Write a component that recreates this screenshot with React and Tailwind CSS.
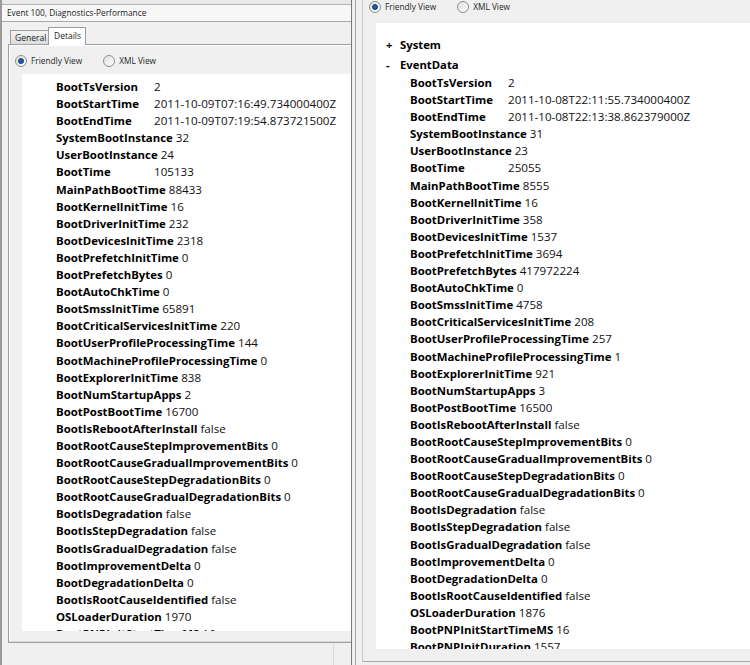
import React from "react";

const leftRows = [
  ["BootTsVersion", "2"],
  ["BootStartTime", "2011-10-09T07:16:49.734000400Z"],
  ["BootEndTime", "2011-10-09T07:19:54.873721500Z"],
  ["SystemBootInstance", "32"],
  ["UserBootInstance", "24"],
  ["BootTime", "105133"],
  ["MainPathBootTime", "88433"],
  ["BootKernelInitTime", "16"],
  ["BootDriverInitTime", "232"],
  ["BootDevicesInitTime", "2318"],
  ["BootPrefetchInitTime", "0"],
  ["BootPrefetchBytes", "0"],
  ["BootAutoChkTime", "0"],
  ["BootSmssInitTime", "65891"],
  ["BootCriticalServicesInitTime", "220"],
  ["BootUserProfileProcessingTime", "144"],
  ["BootMachineProfileProcessingTime", "0"],
  ["BootExplorerInitTime", "838"],
  ["BootNumStartupApps", "2"],
  ["BootPostBootTime", "16700"],
  ["BootIsRebootAfterInstall", "false"],
  ["BootRootCauseStepImprovementBits", "0"],
  ["BootRootCauseGradualImprovementBits", "0"],
  ["BootRootCauseStepDegradationBits", "0"],
  ["BootRootCauseGradualDegradationBits", "0"],
  ["BootIsDegradation", "false"],
  ["BootIsStepDegradation", "false"],
  ["BootIsGradualDegradation", "false"],
  ["BootImprovementDelta", "0"],
  ["BootDegradationDelta", "0"],
  ["BootIsRootCauseIdentified", "false"],
  ["OSLoaderDuration", "1970"],
  ["BootPNPInitStartTimeMS", "16"],
];

const rightRows = [
  ["BootTsVersion", "2"],
  ["BootStartTime", "2011-10-08T22:11:55.734000400Z"],
  ["BootEndTime", "2011-10-08T22:13:38.862379000Z"],
  ["SystemBootInstance", "31"],
  ["UserBootInstance", "23"],
  ["BootTime", "25055"],
  ["MainPathBootTime", "8555"],
  ["BootKernelInitTime", "16"],
  ["BootDriverInitTime", "358"],
  ["BootDevicesInitTime", "1537"],
  ["BootPrefetchInitTime", "3694"],
  ["BootPrefetchBytes", "417972224"],
  ["BootAutoChkTime", "0"],
  ["BootSmssInitTime", "4758"],
  ["BootCriticalServicesInitTime", "208"],
  ["BootUserProfileProcessingTime", "257"],
  ["BootMachineProfileProcessingTime", "1"],
  ["BootExplorerInitTime", "921"],
  ["BootNumStartupApps", "3"],
  ["BootPostBootTime", "16500"],
  ["BootIsRebootAfterInstall", "false"],
  ["BootRootCauseStepImprovementBits", "0"],
  ["BootRootCauseGradualImprovementBits", "0"],
  ["BootRootCauseStepDegradationBits", "0"],
  ["BootRootCauseGradualDegradationBits", "0"],
  ["BootIsDegradation", "false"],
  ["BootIsStepDegradation", "false"],
  ["BootIsGradualDegradation", "false"],
  ["BootImprovementDelta", "0"],
  ["BootDegradationDelta", "0"],
  ["BootIsRootCauseIdentified", "false"],
  ["OSLoaderDuration", "1876"],
  ["BootPNPInitStartTimeMS", "16"],
  ["BootPNPInitDuration", "1557"],
];

function Radio({ checked, label, className = "" }) {
  return (
    <div className={`flex items-center ${className}`}>
      <span className="w-[12px] h-[12px] shrink-0 rounded-full border border-[#8f8f8f] bg-gradient-to-br from-[#e2e2e2] to-[#fdfdfd] flex items-center justify-center">
        {checked && <span className="w-[6px] h-[6px] rounded-full bg-[#1f5fa8] border border-[#0e3f7a]" />}
      </span>
      <span className="ml-[4px] text-[8.3px] text-[#1e1e1e]">{label}</span>
    </div>
  );
}

function Row({ label, value }) {
  return (
    <div className="flex h-[17.1px] leading-[17.1px] whitespace-nowrap">
      <span className="min-w-[98px] pr-[3px] font-bold text-[11.4px] text-black">{label}</span>
      <span className="text-[11.6px] text-[#111]">{value}</span>
    </div>
  );
}

function LeftPanel() {
  return (
    <div className="w-[352px] h-full shrink-0 flex flex-col border-l-2 border-[#9a9a9a] border-r border-r-[#7a7a7a]">
      <div className="h-[5px] shrink-0 border-b border-[#b5b5b5] bg-[#e9e9e9]" />
      <div className="h-[17px] shrink-0 bg-[#f7f7f7] border-b border-[#a9a9a9] pl-[5px] text-[8.3px] leading-[16px] text-[#1a1a1a]">
        Event 100, Diagnostics-Performance
      </div>
      <div className="h-[22px] shrink-0 flex items-end pl-[8px]">
        <div className="h-[14px] w-[39px] border border-b-0 border-[#9c9c9c] bg-gradient-to-b from-[#f4f4f4] to-[#dcdcdc] text-[8.5px] leading-[13px] pl-[4px] text-[#222]">
          General
        </div>
        <div className="h-[18px] w-[38px] -ml-px border border-b-0 border-[#9c9c9c] bg-white text-[8.5px] leading-[15px] pl-[5px] text-[#222] relative top-px">
          Details
        </div>
      </div>
      <div className="flex-1 min-h-0 ml-[6px] border border-[#a0a0a0] border-r-0 bg-[#f0f0f0] flex flex-col shadow-[inset_1px_1px_0_#fff]">
        <div className="h-[29px] shrink-0 flex items-center pl-[6px] pt-[3px]">
          <Radio checked label="Friendly View" />
          <Radio label="XML View" className="ml-[21px]" />
        </div>
        <div className="flex-1 min-h-0 ml-[13px] bg-white overflow-hidden pl-[34px] pt-[4px]">
          {leftRows.map(([l, v]) => (
            <Row key={l} label={l} value={v} />
          ))}
        </div>
        <div className="h-[11px] shrink-0 border-b border-[#d8d8d8]" />
      </div>
      <div className="h-[22px] shrink-0 flex">
        <div className="w-[332px] border-r border-[#dadada]" />
      </div>
    </div>
  );
}

function RightPanel() {
  return (
    <div className="flex-1 h-full flex flex-col border-l border-[#a8a8a8] ml-[3px]">
      <div className="flex-1 min-h-0 ml-[6px] border-l border-[#c9c9c9] flex flex-col mb-[3px] border-b border-b-[#a9a9a9]">
        <div className="h-[23px] shrink-0 flex items-start pl-[6px] pt-px">
          <Radio checked label="Friendly View" />
          <Radio label="XML View" className="ml-[21px]" />
        </div>
        <div className="flex-1 min-h-0 ml-[13px] bg-white overflow-hidden pt-[13px]">
          <div className="flex h-[18px] leading-[18px] items-center font-bold text-[11.3px]">
            <span className="w-[24px] pl-[10px]">+</span>
            <span>System</span>
          </div>
          <div className="flex h-[19px] leading-[19px] items-center font-bold text-[11.3px] mt-[1px]">
            <span className="w-[24px] pl-[10px]">-</span>
            <span>EventData</span>
          </div>
          <div className="pl-[34px]">
            {rightRows.map(([l, v]) => (
              <Row key={l} label={l} value={v} />
            ))}
          </div>
        </div>
        <div className="h-[12px] shrink-0" />
      </div>
    </div>
  );
}

export default function App() {
  return (
    <div className="w-[750px] h-[665px] overflow-hidden bg-[#f0f0f0] flex font-['Open_Sans',sans-serif]">
      <LeftPanel />
      <RightPanel />
    </div>
  );
}
